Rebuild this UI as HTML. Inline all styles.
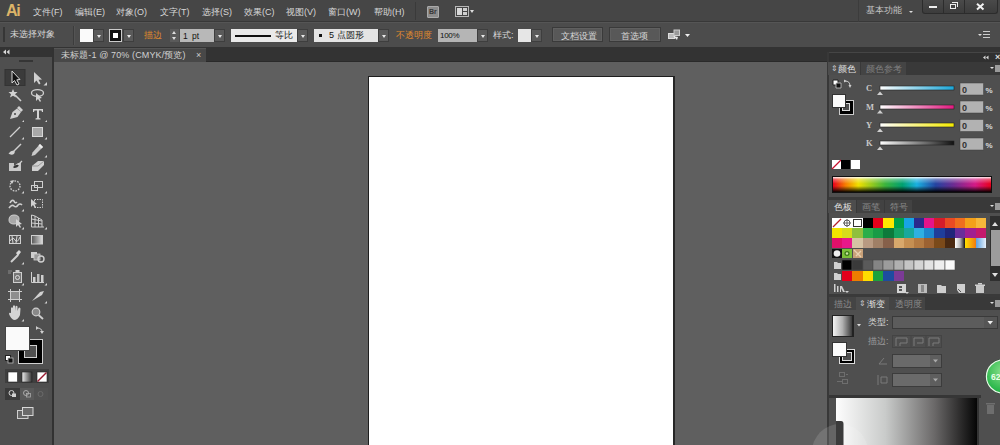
<!DOCTYPE html>
<html><head><meta charset="utf-8">
<style>
*{margin:0;padding:0;box-sizing:border-box}
html,body{width:1000px;height:445px;overflow:hidden;background:#5f5f5f;font-family:"Liberation Sans",sans-serif;position:relative}
div,span{position:absolute}
.t{white-space:nowrap;line-height:1;color:#d6d6d6;font-size:9px}
.dd{background:#5a5a5a;border:1px solid #3e3e3e;width:11px;height:13px}
.dd:after{content:"";position:absolute;left:3px;top:5px;border-left:2.5px solid transparent;border-right:2.5px solid transparent;border-top:3px solid #e8e8e8}
.tri{width:0;height:0;border-left:3px solid transparent;border-right:3px solid transparent;border-top:4px solid #ddd}
</style></head>
<body>
<!-- MENU BAR -->
<div style="left:0;top:0;width:1000px;height:22px;background:#464646;border-bottom:1px solid #383838"></div>
<div class="t" style="left:6px;top:3px;font-size:16px;font-weight:bold;color:#dcb468;letter-spacing:-1.3px">Ai</div>
<div class="t" style="left:33px;top:8px">文件(F)</div>
<div class="t" style="left:75px;top:8px">编辑(E)</div>
<div class="t" style="left:116px;top:8px">对象(O)</div>
<div class="t" style="left:160px;top:8px">文字(T)</div>
<div class="t" style="left:202px;top:8px">选择(S)</div>
<div class="t" style="left:244px;top:8px">效果(C)</div>
<div class="t" style="left:286px;top:8px">视图(V)</div>
<div class="t" style="left:328px;top:8px">窗口(W)</div>
<div class="t" style="left:374px;top:8px">帮助(H)</div>
<div style="left:415px;top:2px;width:1px;height:18px;background:#3a3a3a"></div>
<div style="left:427px;top:6px;width:12px;height:12px;background:#8c8c8c;border:1px solid #aaa;border-radius:1px"></div>
<div class="t" style="left:429px;top:8px;font-size:7px;font-weight:bold;color:#383838">Br</div>
<div style="left:455px;top:6px;width:14px;height:11px;border:1px solid #b8b8b8;background:#444"></div>
<div style="left:457px;top:8px;width:5px;height:7px;background:#d8d8d8"></div>
<div style="left:463px;top:8px;width:4px;height:3px;background:#d0d0d0"></div>
<div style="left:463px;top:12px;width:4px;height:3px;background:#d0d0d0"></div>
<div class="tri" style="left:470px;top:10px;border-width:3.5px 2.5px 0 2.5px"></div>
<div style="left:858px;top:0;width:1px;height:22px;background:#3c3c3c"></div>
<div class="t" style="left:866px;top:6px;color:#c8c8c8">基本功能</div>
<div class="tri" style="left:909px;top:11px;border-width:2px 2px 0 2px"></div>
<!-- window controls -->
<div style="left:922px;top:0;width:76px;height:14px;background:linear-gradient(#4a4a4a,#3c3c3c);border:1px solid #2c2c2c;border-top:none;border-radius:0 0 3px 3px"></div>
<div style="left:943px;top:0;width:1px;height:13px;background:#2c2c2c"></div>
<div style="left:964px;top:0;width:1px;height:13px;background:#2c2c2c"></div>
<div style="left:929px;top:6px;width:8px;height:2px;background:#eee"></div>
<div style="left:950px;top:4px;width:6px;height:5px;border:1px solid #eee"></div>
<div style="left:952px;top:2px;width:6px;height:5px;border:1px solid #eee;border-left:none;border-bottom:none"></div>
<svg style="position:absolute;left:970px;top:0" width="20" height="14" viewBox="970 0 20 14"><path d="M977,3.8 L983.5,9.5 M983.5,3.8 L977,9.5" stroke="#f2f2f2" stroke-width="2"/></svg>

<!-- CONTROL BAR -->
<div style="left:0;top:22px;width:1000px;height:25px;background:#4c4c4c;border-top:1px solid #555"></div>
<div style="left:3px;top:27px;width:2px;height:15px;background:#363636"></div>
<div style="left:73px;top:26px;width:1px;height:19px;background:#3c3c3c"></div><div style="left:74px;top:26px;width:1px;height:19px;background:#545454"></div>
<div class="t" style="left:10px;top:30px;font-size:9px">未选择对象</div>
<div style="left:80px;top:29px;width:13px;height:13px;background:#fafafa"></div>
<div class="dd" style="left:93px;top:29px"></div>
<div style="left:109px;top:29px;width:13px;height:13px;background:#111;border:1px solid #ccc"></div>
<div style="left:112px;top:32px;width:7px;height:7px;background:#fff;border:1px solid #111"></div>
<div class="dd" style="left:123px;top:29px"></div>
<div class="t" style="left:144px;top:31px;font-size:9px;color:#e08a2e">描边</div>
<div style="left:170px;top:29px;width:9px;height:13px;background:#5a5a5a"></div>
<div class="tri" style="left:172px;top:31px;border-width:0 2.5px 3px 2.5px;border-bottom:3px solid #ddd;border-top:none"></div>
<div class="tri" style="left:172px;top:37px;border-width:3px 2.5px 0 2.5px"></div>
<div style="left:180px;top:29px;width:34px;height:13px;background:#b8b8b8"></div>
<div class="t" style="left:183px;top:32px;font-size:8.5px;color:#111;word-spacing:2px">1 pt</div>
<div class="dd" style="left:214px;top:29px"></div>
<div style="left:231px;top:29px;width:66px;height:13px;background:#eaeaea"></div>
<div style="left:235px;top:35px;width:36px;height:2px;background:#111"></div>
<div class="t" style="left:275px;top:31px;font-size:9px;color:#111">等比</div>
<div class="dd" style="left:297px;top:29px"></div>
<div style="left:314px;top:29px;width:64px;height:13px;background:#e4e4e4"></div>
<div style="left:319px;top:34px;width:3px;height:3px;background:#111"></div>
<div class="t" style="left:329px;top:31px;font-size:9px;color:#111">5 点圆形</div>
<div class="dd" style="left:378px;top:29px"></div>
<div class="t" style="left:396px;top:31px;font-size:9px;color:#e08a2e">不透明度</div>
<div style="left:438px;top:29px;width:39px;height:13px;background:#b5b5b5"></div>
<div class="t" style="left:440px;top:32px;font-size:8px;color:#111;letter-spacing:-0.3px">100%</div>
<div class="dd" style="left:477px;top:29px"></div>
<div class="t" style="left:493px;top:31px;font-size:9px">样式:</div>
<div style="left:518px;top:29px;width:13px;height:13px;background:#e6e6e6"></div>
<div class="dd" style="left:531px;top:29px"></div>
<div style="left:552px;top:27px;width:51px;height:15px;background:#585858;border:1px solid #3a3a3a;box-shadow:inset 0 0 0 1px #606060"></div>
<div class="t" style="left:561px;top:32px;font-size:9px">文档设置</div>
<div style="left:609px;top:27px;width:52px;height:15px;background:#585858;border:1px solid #3a3a3a;box-shadow:inset 0 0 0 1px #606060"></div>
<div class="t" style="left:621px;top:32px;font-size:9px">首选项</div>
<svg style="position:absolute;left:665px;top:27px" width="30" height="16" viewBox="665 27 30 16">
<rect x="668.5" y="33.5" width="6" height="5" fill="#bbb" stroke="#ddd" stroke-width="1"/>
<rect x="674" y="30" width="5.5" height="5.5" fill="#999" stroke="#ccc" stroke-width="1"/>
<path d="M673,36 L677,40 L678,37 Z" fill="#e8e8e8"/>
<path d="M685,34 L690,34 L687.5,37 Z" fill="#eee"/>
</svg>

<div class="tri" style="left:978px;top:34px;border-width:2px 2px 0 2px"></div>
<div style="left:983px;top:31px;width:7px;height:1px;background:#ccc"></div>
<div style="left:983px;top:34px;width:7px;height:1px;background:#ccc"></div>
<div style="left:983px;top:37px;width:7px;height:1px;background:#ccc"></div>

<!-- DARK STRIP -->
<div style="left:0;top:47px;width:1000px;height:15px;background:#333;border-bottom:1px solid #2a2a2a"></div>
<div style="left:54px;top:48px;width:152px;height:14px;background:#484848;border-top:1px solid #555"></div>
<div class="t" style="left:61px;top:51px;font-size:9px;color:#d0d0d0;letter-spacing:0.12px">未标题-1 @ 70% (CMYK/预览)</div>
<div class="t" style="left:196px;top:51px;font-size:9px;color:#ccc">×</div>

<!-- LEFT TOOLBAR -->
<div style="left:0;top:47px;width:52px;height:398px;background:#4f4f4f"></div>
<div style="left:0;top:47px;width:52px;height:10px;background:#333"></div>
<svg style="position:absolute;left:0;top:47px" width="14" height="10" viewBox="0 47 14 10"><path d="M3,52 L6,49.5 L6,54.5 Z M6.5,52 L9.5,49.5 L9.5,54.5 Z" fill="#d8d8d8"/></svg>
<div style="left:52px;top:47px;width:2px;height:398px;background:#323232"></div>
<div style="left:19px;top:60px;width:14px;height:2px;background:#353535"></div>


<svg style="position:absolute;left:0;top:0" width="60" height="445" viewBox="0 0 60 445">
<g fill="#d2d2d2" stroke="none">
<!-- active selection box -->
<rect x="5" y="69.5" width="20" height="16" fill="#3b3b3b" stroke="#333" stroke-width="1"/>
<!-- selection arrow -->
<path d="M12,71 L12,83 L14.5,80.5 L17,85 L19,84 L16.8,79.8 L20,79.5 Z" fill="#111" stroke="#d8d8d8" stroke-width="1"/>
<!-- direct selection -->
<path d="M34,72 L34,83 L36.5,80.5 L39,84.5 L40.5,83.5 L38.5,79.8 L42,79.5 Z" fill="#cfcfcf"/>
<path d="M47,82 L47,85.5 L43.5,85.5 Z"/>
<!-- magic wand -->
<path d="M13,89 L14.3,92 L17.5,92 L15,94.2 L16,97.5 L13,95.7 L10,97.5 L11,94.2 L8.5,92 L11.7,92 Z"/>
<path d="M15,95 L21,101" stroke="#cfcfcf" stroke-width="1.6"/>
<!-- lasso -->
<ellipse cx="37.5" cy="93" rx="6" ry="3.4" fill="none" stroke="#cfcfcf" stroke-width="1.3"/>
<path d="M36,93 L36,101 L38,99 L40,102 L41,101 L39.5,98.5 L42,98 Z"/>
<!-- pen -->
<path d="M10,119 L12.5,112 L17,108.5 L21,112 L17.5,117 Z" fill="#d0d0d0"/>
<path d="M17,108 L19,106 L23,110 L21,112 Z" fill="#d0d0d0"/>
<circle cx="15" cy="114" r="1" fill="#444"/>
<path d="M24,120 L24,122 L22,122 Z"/>
<!-- Type T -->
<path d="M33,109 L43,109 L43,112 L42,112 L41.5,110.5 L39,110.5 L39,118 L40.5,118.5 L40.5,119.5 L35.5,119.5 L35.5,118.5 L37,118 L37,110.5 L34.5,110.5 L34,112 L33,112 Z" fill="#d4d4d4"/>
<path d="M47,120 L47,122 L45,122 Z"/>
<!-- line -->
<path d="M10,137 L20,127" stroke="#d0d0d0" stroke-width="1.3"/>
<path d="M24,137 L24,139.5 L21.5,139.5 Z"/>
<!-- rectangle -->
<rect x="32.5" y="127.5" width="10" height="9" fill="#a8a8a8" stroke="#d8d8d8" stroke-width="1"/>
<path d="M47,137 L47,139.5 L44.5,139.5 Z"/>
<!-- paintbrush -->
<path d="M21,144 L14,151" stroke="#d0d0d0" stroke-width="1.5"/>
<path d="M8.5,153.5 Q11,150 14.5,150.5 Q15.5,153 13,154.5 Q10,155 8.5,153.5 Z"/>
<!-- pencil -->
<path d="M40,144 L43,147 L35,155 L31.5,156 L32.5,152.5 Z" fill="#cacaca"/>
<path d="M40,144 L43,147 L41.5,148.5 L38.5,145.5 Z" fill="#eee"/>
<path d="M47,155 L47,157.5 L44.5,157.5 Z"/>
<!-- blob brush -->
<path d="M9,163 L14,163 L14,166 L18,163 L21,163 L21,171 L9,171 Z" fill="#c8c8c8"/>
<path d="M13,167 Q16,164 19,165 Q18,168 14,168 Z" fill="#333"/>
<path d="M18,165 L22,161" stroke="#d0d0d0" stroke-width="1.3"/>
<!-- eraser -->
<path d="M32,166 L38,161 L44,161 L44,165 L38,171 L32,171 Z" fill="#d0d0d0"/>
<path d="M32,166 L38,166 L44,161" stroke="#8a8a8a" stroke-width="0.8" fill="none"/>
<path d="M47,172 L47,174.5 L44.5,174.5 Z"/>
<!-- rotate -->
<circle cx="15" cy="186" r="5" fill="none" stroke="#c8c8c8" stroke-width="1.4" stroke-dasharray="1.6 1.2"/>
<path d="M10,181 L14,180 L12,184 Z"/>
<path d="M24,191 L24,193.5 L21.5,193.5 Z"/>
<!-- scale -->
<rect x="34.5" y="181.5" width="8" height="6" fill="none" stroke="#cfcfcf" stroke-width="1"/>
<rect x="31.5" y="185.5" width="6" height="5" fill="none" stroke="#cfcfcf" stroke-width="1"/>
<path d="M47,191 L47,193.5 L44.5,193.5 Z"/>
<!-- warp / puppet -->
<path d="M9,208 Q12,204 14,206 Q16,208 18,205 Q20,203 22,205 M10,203 Q12,199 14,201 Q15,204 17,202" fill="none" stroke="#cfcfcf" stroke-width="1.6"/>
<path d="M24,209 L24,211.5 L21.5,211.5 Z"/>
<!-- free transform -->
<rect x="34.5" y="199.5" width="8" height="8" fill="none" stroke="#cfcfcf" stroke-width="1" stroke-dasharray="1.5 1"/>
<path d="M31,199 L31,207 L33,205 L35,208 L36,207 L34.5,204.5 L37,204 Z"/>
<!-- shape builder -->
<path d="M9,220 Q9,215 14,215 Q19,215 19,219 Q19,224 14,224 Q9,224 9,220 Z" fill="#a8a8a8" stroke="#cfcfcf" stroke-width="1"/>
<path d="M16,219 L16,227 L18,225 L20,228 L21,227 L19.5,224.5 L22,224 Z"/>
<path d="M24,227 L24,229.5 L21.5,229.5 Z"/>
<!-- perspective grid -->
<path d="M31.5,215 L31.5,227 L44,227 M31.5,215 L35,216 L35,227 M35,216 L38.5,218 L38.5,227 M38.5,218 L42,220 L42,227 M31.5,219 L42,221 M31.5,223 L42,224" fill="none" stroke="#cfcfcf" stroke-width="1"/>
<path d="M47,227 L47,229.5 L44.5,229.5 Z"/>
<!-- mesh -->
<rect x="9.5" y="235.5" width="11" height="8" fill="#555" stroke="#d0d0d0" stroke-width="1"/>
<path d="M10,241 Q13,236 15,240 Q17,244 20,237 M12,236 L13,243 M17,236 L16,243" fill="none" stroke="#d8d8d8" stroke-width="1"/>
<!-- gradient -->
<defs><linearGradient id="tg" x1="0" x2="1"><stop offset="0" stop-color="#555"/><stop offset="1" stop-color="#ddd"/></linearGradient></defs>
<rect x="31.5" y="235.5" width="11" height="8.5" fill="url(#tg)" stroke="#cfcfcf" stroke-width="1"/>
<!-- eyedropper -->
<path d="M11,262 L18,255" stroke="#cfcfcf" stroke-width="2"/>
<path d="M16,253 L19,250 L21,252 L18,256 Z" fill="#d8d8d8"/>
<path d="M24,262 L24,264.5 L21.5,264.5 Z"/>
<!-- blend -->
<rect x="31" y="252" width="6" height="6" fill="#cfcfcf"/>
<rect x="34" y="254" width="6" height="6" fill="#9a9a9a" stroke="#cfcfcf" stroke-width="0.8"/>
<circle cx="41" cy="259" r="3" fill="none" stroke="#cfcfcf" stroke-width="1.4"/>
<!-- symbol sprayer -->
<rect x="13.5" y="272.5" width="8" height="10" fill="#777" stroke="#cfcfcf" stroke-width="1"/>
<circle cx="17.5" cy="277.5" r="2" fill="none" stroke="#ddd" stroke-width="1"/>
<rect x="15.5" y="270" width="4" height="2" fill="#cfcfcf"/>
<path d="M8,271 L12,271 M8,273 L11,273" stroke="#999" stroke-width="0.8"/>
<path d="M24,283 L24,285.5 L21.5,285.5 Z"/>
<!-- graph -->
<path d="M31.5,272 L31.5,282.5 L44,282.5" fill="none" stroke="#cfcfcf" stroke-width="1"/>
<rect x="33" y="277" width="2.5" height="5" fill="#cfcfcf"/>
<rect x="37" y="274" width="2.5" height="8" fill="#bbb"/>
<rect x="41" y="275" width="2.5" height="7" fill="#cfcfcf"/>
<path d="M47,283 L47,285.5 L44.5,285.5 Z"/>
<!-- artboard -->
<rect x="10.5" y="291.5" width="9" height="8" fill="#8e8e8e"/>
<path d="M8,291.5 L22,291.5 M8,299.5 L22,299.5 M10.5,289 L10.5,302 M19.5,289 L19.5,302" stroke="#cfcfcf" stroke-width="1"/>
<!-- slice -->
<path d="M32,301 L40,292 L44,291 L42,295 Z" fill="#d0d0d0"/>
<path d="M47,301 L47,303.5 L44.5,303.5 Z"/>
<!-- hand -->
<path d="M11,313 L11,308 Q12,306.5 13,308 L13,311 L13,306 Q14,304.5 15,306 L15,311 L15.5,306.5 Q16.5,305 17.5,306.5 L17.5,311 L18.5,308 Q19.5,307 20.5,308.5 L20,315 Q18,320 14,320 Q11,319 9,314 Q9,312 11,313 Z" fill="#d4d4d4"/>
<path d="M24,319 L24,321.5 L21.5,321.5 Z"/>
<!-- zoom -->
<circle cx="36" cy="312" r="3.8" fill="#8a8a8a" stroke="#cfcfcf" stroke-width="1.2"/>
<path d="M38.5,315 L43,319" stroke="#cfcfcf" stroke-width="1.8"/>
</g>
</svg>
<!-- fill/stroke -->
<div style="left:18px;top:339px;width:25px;height:25px;border:1px solid #cfcfcf;background:#000"></div>
<div style="left:24px;top:345px;width:13px;height:13px;border:1px solid #cfcfcf;background:#4f4f4f"></div>
<div style="left:5px;top:326px;width:25px;height:25px;background:#fafafa;border:1px solid #444"></div>
<svg style="position:absolute;left:0;top:320px" width="60" height="125" viewBox="0 320 60 125">
<path d="M37,328 Q42,328 42,332" fill="none" stroke="#cfcfcf" stroke-width="1"/>
<path d="M36,326 L38.5,328 L36,330 Z M40,331 L42,334 L44,331 Z" fill="#cfcfcf"/>
<rect x="5.5" y="355.5" width="5" height="5" fill="#fff" stroke="#222" stroke-width="1"/>
<rect x="8" y="358" width="5" height="5" fill="#111" stroke="#bbb" stroke-width="0.8"/>
<!-- color mode buttons -->
<rect x="5" y="369" width="44" height="14" fill="#3f3f3f"/>
<rect x="8" y="372" width="9.5" height="10" fill="#fff" stroke="#222" stroke-width="0.6"/>
<defs><linearGradient id="tg2" x1="0" x2="1"><stop offset="0" stop-color="#eee"/><stop offset="1" stop-color="#333"/></linearGradient></defs>
<rect x="22" y="372" width="10" height="10" fill="url(#tg2)" stroke="#222" stroke-width="0.6"/>
<rect x="37" y="372" width="10" height="10" fill="#fff" stroke="#222" stroke-width="0.6"/>
<path d="M37.5,381.5 L46.5,372.5" stroke="#9a1b30" stroke-width="1.4"/>
<!-- draw mode buttons -->
<rect x="5" y="388" width="15" height="12" fill="#3a3a3a"/>
<rect x="20" y="388" width="14" height="12" fill="#5a5a5a"/>
<rect x="34" y="388" width="14" height="12" fill="#525252"/>
<circle cx="11.5" cy="393" r="2.5" fill="none" stroke="#cfcfcf" stroke-width="1"/>
<rect x="12" y="393.5" width="4" height="3.5" fill="#cfcfcf"/>
<circle cx="26" cy="393" r="2.5" fill="none" stroke="#aaa" stroke-width="1"/>
<rect x="26.5" y="393.5" width="4" height="3.5" fill="none" stroke="#aaa" stroke-width="0.8"/>
<circle cx="40.5" cy="394" r="2.5" fill="none" stroke="#6a6a6a" stroke-width="1"/>
<!-- screen mode -->
<rect x="17.5" y="410.5" width="10.5" height="8" fill="#666" stroke="#cfcfcf" stroke-width="1"/>
<rect x="22.5" y="407.5" width="10.5" height="8" fill="#6a6a6a" stroke="#d8d8d8" stroke-width="1"/>
</svg>

<!-- ARTBOARD -->
<div style="left:368px;top:76px;width:307px;height:369px;background:#fff;border-top:1px solid #1e1e1e;border-left:1px solid #1e1e1e;border-right:2px solid #262626"></div>

<!-- RIGHT DOCK -->
<div style="left:827px;top:52px;width:173px;height:393px;background:#4f4f4f"></div>
<div style="left:827px;top:52px;width:173px;height:10px;background:#303030;border-top:1px solid #454545;border-radius:3px 0 0 0"></div>
<div style="left:827px;top:52px;width:2px;height:393px;background:#383838"></div>
<svg style="position:absolute;left:980px;top:53px" width="20" height="9" viewBox="980 53 20 9"><path d="M983,57.5 L985.5,55.5 L985.5,59.5 Z M986,57.5 L988.5,55.5 L988.5,59.5 Z" fill="#d8d8d8"/></svg>
<div class="t" style="left:995px;top:53px;font-size:9px;color:#ddd;font-weight:bold">×</div>
<!-- color panel tabs -->
<div style="left:829px;top:62px;width:171px;height:13px;background:#393939"></div>
<div style="left:828px;top:62px;width:32px;height:13px;background:#4d4d4d"></div>
<div style="left:861px;top:62px;width:45px;height:13px;background:#444"></div>
<div class="t" style="left:831px;top:65px;font-size:8px;color:#ccc">⇕</div>
<div class="t" style="left:838px;top:65px;font-size:9px;color:#e0e0e0">颜色</div>
<div class="t" style="left:866px;top:65px;font-size:9px;color:#808080">颜色参考</div>
<div class="tri" style="left:990px;top:67px;border-width:2px 2px 0 2px"></div>
<div style="left:995px;top:65px;width:5px;height:7px;background:#9a9a9a"></div>
<!-- color panel body -->
<div style="left:832px;top:94px;width:14px;height:14px;background:#fbfbfb;border:1px solid #333;z-index:2"></div>
<div style="left:839px;top:100px;width:15px;height:15px;background:#000;border:1px solid #ccc"></div>
<div style="left:842px;top:103px;width:8px;height:8px;background:#4f4f4f;border:1px solid #ddd"></div>
<svg style="position:absolute;left:827px;top:75px" width="173" height="125" viewBox="827 75 173 125">
<defs>
<linearGradient id="gc" x1="0" x2="1"><stop offset="0" stop-color="#fff"/><stop offset="1" stop-color="#1aa6d8"/></linearGradient>
<linearGradient id="gm" x1="0" x2="1"><stop offset="0" stop-color="#fff"/><stop offset="1" stop-color="#e2197f"/></linearGradient>
<linearGradient id="gy" x1="0" x2="1"><stop offset="0" stop-color="#fff"/><stop offset="1" stop-color="#f4ea00"/></linearGradient>
<linearGradient id="gk" x1="0" x2="1"><stop offset="0" stop-color="#fff"/><stop offset="1" stop-color="#111"/></linearGradient>
<linearGradient id="spec" x1="0" x2="1">
<stop offset="0" stop-color="#e8001c"/><stop offset="0.08" stop-color="#f57e00"/><stop offset="0.16" stop-color="#f0e000"/><stop offset="0.33" stop-color="#3cb43c"/><stop offset="0.44" stop-color="#00a070"/><stop offset="0.53" stop-color="#19b0e0"/><stop offset="0.65" stop-color="#2443a0"/><stop offset="0.76" stop-color="#6a2c92"/><stop offset="0.9" stop-color="#d41a86"/><stop offset="1" stop-color="#e8001c"/>
</linearGradient>
<linearGradient id="specv" x1="0" x2="0" y1="0" y2="1"><stop offset="0" stop-color="#fff" stop-opacity="0.95"/><stop offset="0.15" stop-color="#fff" stop-opacity="0.35"/><stop offset="0.45" stop-color="#fff" stop-opacity="0"/><stop offset="0.6" stop-color="#000" stop-opacity="0"/><stop offset="1" stop-color="#000" stop-opacity="0.95"/></linearGradient>
</defs>
<path d="M833,80 L838,80 L838,85 L833,85 Z" fill="#fff" stroke="#222" stroke-width="1"/>
<path d="M836,83 L841,83 L841,88 L836,88 Z" fill="#111" stroke="#ccc" stroke-width="0.8"/>
<path d="M845,81 Q850,81 850,86" fill="none" stroke="#cfcfcf" stroke-width="1"/>
<path d="M844,79.5 L846.5,81 L844,82.5 Z M848.5,85 L850,88 L851.5,85 Z" fill="#cfcfcf"/>
<g font-family="Liberation Serif" font-size="8.5" font-weight="bold" fill="#c8c8c8">
<text x="866" y="91">C</text><text x="866" y="110">M</text><text x="866" y="128">Y</text><text x="866" y="146">K</text>
</g>
<rect x="880" y="86" width="74" height="4" fill="url(#gc)" stroke="#222" stroke-width="0.6"/>
<rect x="880" y="105" width="74" height="4" fill="url(#gm)" stroke="#222" stroke-width="0.6"/>
<rect x="880" y="123" width="74" height="4" fill="url(#gy)" stroke="#222" stroke-width="0.6"/>
<rect x="880" y="141" width="74" height="4" fill="url(#gk)" stroke="#222" stroke-width="0.6"/>
<g fill="#cfcfcf">
<path d="M877,95 L880,91.5 L883,95 Z"/><path d="M877,113.5 L880,110 L883,113.5 Z"/><path d="M877,132 L880,128.5 L883,132 Z"/><path d="M877,150 L880,146.5 L883,150 Z"/>
</g>
<g fill="#b2b2b2" stroke="#3e3e3e" stroke-width="0.5">
<rect x="960" y="83" width="23.5" height="12"/><rect x="960" y="101" width="23.5" height="12"/><rect x="960" y="119.5" width="23.5" height="12"/><rect x="960" y="138" width="23.5" height="12"/>
</g>
<g font-family="Liberation Sans" font-size="9" font-weight="bold" fill="#333"><text x="962" y="92.5">0</text><text x="962" y="110.5">0</text><text x="962" y="129">0</text><text x="962" y="147.5">0</text></g>
<g font-family="Liberation Sans" font-size="8" font-weight="bold" fill="#dcdcdc"><text x="985.5" y="92.5">%</text><text x="985.5" y="110.5">%</text><text x="985.5" y="129">%</text><text x="985.5" y="147.5">%</text></g>
<!-- none/black/white -->
<rect x="832" y="160" width="9" height="9" fill="#fff"/>
<path d="M832,169 L841,160" stroke="#c8102e" stroke-width="1.2"/>
<rect x="841" y="160" width="9" height="9" fill="#000"/>
<rect x="851" y="160" width="9" height="9" fill="#fff"/>
<!-- spectrum -->
<rect x="832" y="176" width="160" height="17" fill="#111"/>
<rect x="833" y="177" width="158" height="15" fill="url(#spec)"/>
<rect x="833" y="177" width="158" height="15" fill="url(#specv)"/>
</svg>
<div style="left:829px;top:197px;width:171px;height:3px;background:#3a3a3a"></div>
<!-- SWATCHES PANEL -->
<div style="left:829px;top:200px;width:171px;height:13px;background:#393939"></div>
<div style="left:828px;top:200px;width:28px;height:13px;background:#4d4d4d"></div>
<div style="left:857px;top:200px;width:27px;height:13px;background:#424242"></div>
<div style="left:885px;top:200px;width:27px;height:13px;background:#424242"></div>
<div class="t" style="left:834px;top:203px;font-size:9px;color:#e0e0e0">色板</div>
<div class="t" style="left:862px;top:203px;font-size:9px;color:#8a8a8a">画笔</div>
<div class="t" style="left:890px;top:203px;font-size:9px;color:#8a8a8a">符号</div>
<div class="tri" style="left:990px;top:205px;border-width:2px 2px 0 2px"></div>
<div style="left:995px;top:203px;width:5px;height:7px;background:#9a9a9a"></div>
<svg style="position:absolute;left:827px;top:213px" width="173" height="232" viewBox="827 213 173 232">
<defs>
<linearGradient id="sg1" x1="0" x2="1"><stop offset="0" stop-color="#fff"/><stop offset="0.5" stop-color="#bbb"/><stop offset="1" stop-color="#111"/></linearGradient>
<linearGradient id="sg2" x1="0" x2="1"><stop offset="0" stop-color="#ffe000"/><stop offset="1" stop-color="#f07a10"/></linearGradient>
<linearGradient id="sg3" x1="0" x2="1"><stop offset="0" stop-color="#5aa0e0"/><stop offset="1" stop-color="#e8f2fc"/></linearGradient>
<linearGradient id="gpv" x1="0" x2="1"><stop offset="0" stop-color="#fdfdfd"/><stop offset="0.35" stop-color="#c9cbca"/><stop offset="0.7" stop-color="#6a6868"/><stop offset="1" stop-color="#050505"/></linearGradient>
<linearGradient id="gsw" x1="0" x2="1"><stop offset="0" stop-color="#f4f4f4"/><stop offset="0.5" stop-color="#b0b0b0"/><stop offset="1" stop-color="#3a3a3a"/></linearGradient>
<radialGradient id="green" cx="0.5" cy="0.35" r="0.6"><stop offset="0" stop-color="#8be08c"/><stop offset="1" stop-color="#26b548"/></radialGradient>
</defs>
<rect x="832" y="218" width="10" height="10" fill="#fff"/><path d="M833,227 L841,219" stroke="#b5202a" stroke-width="1.2"/>
<rect x="842" y="218" width="10" height="10" fill="#fff"/><circle cx="847" cy="223" r="3" fill="none" stroke="#333" stroke-width="0.8"/><path d="M843,223 L851,223 M847,219 L847,227" stroke="#333" stroke-width="0.7"/>
<rect x="852" y="218" width="11" height="10" fill="#fff"/><rect x="853.5" y="219.5" width="8" height="7" fill="#fff" stroke="#333" stroke-width="1"/>
<rect x="863" y="218" width="10" height="10" fill="#000000"/>
<rect x="873" y="218" width="10" height="10" fill="#e3001b"/>
<rect x="883" y="218" width="11" height="10" fill="#ffe800"/>
<rect x="894" y="218" width="10" height="10" fill="#00a04a"/>
<rect x="904" y="218" width="10" height="10" fill="#18a4e4"/>
<rect x="914" y="218" width="10" height="10" fill="#2a2a8c"/>
<rect x="924" y="218" width="10" height="10" fill="#e5148a"/>
<rect x="934" y="218" width="11" height="10" fill="#d51c2b"/>
<rect x="945" y="218" width="10" height="10" fill="#e94a24"/>
<rect x="955" y="218" width="10" height="10" fill="#ef6e1e"/>
<rect x="965" y="218" width="11" height="10" fill="#f4a01a"/>
<rect x="976" y="218" width="10" height="10" fill="#f6b73a"/>
<rect x="832" y="228" width="10" height="10" fill="#f2e500"/>
<rect x="842" y="228" width="10" height="10" fill="#d7dc1c"/>
<rect x="852" y="228" width="11" height="10" fill="#8fc03d"/>
<rect x="863" y="228" width="10" height="10" fill="#2aae4a"/>
<rect x="873" y="228" width="10" height="10" fill="#189b46"/>
<rect x="883" y="228" width="11" height="10" fill="#0c7a3b"/>
<rect x="894" y="228" width="10" height="10" fill="#16a161"/>
<rect x="904" y="228" width="10" height="10" fill="#17a89c"/>
<rect x="914" y="228" width="10" height="10" fill="#2eb0e2"/>
<rect x="924" y="228" width="10" height="10" fill="#1e86cc"/>
<rect x="934" y="228" width="11" height="10" fill="#1f3e9a"/>
<rect x="945" y="228" width="10" height="10" fill="#20267a"/>
<rect x="955" y="228" width="10" height="10" fill="#6a2d9a"/>
<rect x="965" y="228" width="11" height="10" fill="#a01f90"/>
<rect x="976" y="228" width="10" height="10" fill="#c3196c"/>
<rect x="832" y="238" width="10" height="10" fill="#e0106a"/>
<rect x="842" y="238" width="10" height="10" fill="#e8178a"/>
<rect x="852" y="238" width="11" height="10" fill="#d5c2a4"/>
<rect x="863" y="238" width="10" height="10" fill="#b89a82"/>
<rect x="873" y="238" width="10" height="10" fill="#9f7f66"/>
<rect x="883" y="238" width="11" height="10" fill="#86604a"/>
<rect x="894" y="238" width="10" height="10" fill="#d8a86c"/>
<rect x="904" y="238" width="10" height="10" fill="#c58f52"/>
<rect x="914" y="238" width="10" height="10" fill="#b37a42"/>
<rect x="924" y="238" width="10" height="10" fill="#9c6232"/>
<rect x="934" y="238" width="11" height="10" fill="#7b4a1a"/>
<rect x="945" y="238" width="10" height="10" fill="#4a2a12"/>
<rect x="955" y="238" width="10" height="10" fill="url(#sg1)"/>
<rect x="965" y="238" width="11" height="10" fill="url(#sg2)"/>
<rect x="976" y="238" width="10" height="10" fill="url(#sg3)"/>
<rect x="832" y="249" width="10" height="9" fill="#111"/><circle cx="837" cy="253.5" r="3.3" fill="#eee"/>
<rect x="842" y="249" width="10" height="9" fill="#7cc03a"/><circle cx="847" cy="253.5" r="2.6" fill="#3d7a1a"/><circle cx="847" cy="253.5" r="1.2" fill="#cde8a0"/>
<rect x="853" y="249" width="10" height="9" fill="#c8a078"/><path d="M854,250 L861,257 M856,256 L861,251" stroke="#e8d0b0" stroke-width="1.4"/>
<rect x="842" y="260" width="10" height="10" fill="#000" stroke="#4a4a4a" stroke-width="0.6"/>
<rect x="852" y="260" width="11" height="10" fill="#3a3a3a" stroke="#4a4a4a" stroke-width="0.6"/>
<rect x="863" y="260" width="10" height="10" fill="#5a5a5a" stroke="#4a4a4a" stroke-width="0.6"/>
<rect x="873" y="260" width="10" height="10" fill="#858585" stroke="#4a4a4a" stroke-width="0.6"/>
<rect x="883" y="260" width="11" height="10" fill="#9c9c9c" stroke="#4a4a4a" stroke-width="0.6"/>
<rect x="894" y="260" width="10" height="10" fill="#b0b0b0" stroke="#4a4a4a" stroke-width="0.6"/>
<rect x="904" y="260" width="10" height="10" fill="#c4c4c4" stroke="#4a4a4a" stroke-width="0.6"/>
<rect x="914" y="260" width="10" height="10" fill="#d4d4d4" stroke="#4a4a4a" stroke-width="0.6"/>
<rect x="924" y="260" width="10" height="10" fill="#e2e2e2" stroke="#4a4a4a" stroke-width="0.6"/>
<rect x="934" y="260" width="11" height="10" fill="#eeeeee" stroke="#4a4a4a" stroke-width="0.6"/>
<rect x="945" y="260" width="10" height="10" fill="#fafafa" stroke="#4a4a4a" stroke-width="0.6"/>
<rect x="842" y="271" width="10" height="10" fill="#e3001b"/>
<rect x="852" y="271" width="11" height="10" fill="#ee7d00"/>
<rect x="863" y="271" width="10" height="10" fill="#ffdd00"/>
<rect x="873" y="271" width="10" height="10" fill="#1da23d"/>
<rect x="883" y="271" width="11" height="10" fill="#1d4ca0"/>
<rect x="894" y="271" width="10" height="10" fill="#7b3a96"/>
<path d="M834,262 L837,262 L838,263 L841,263 L841,269 L834,269 Z" fill="#cfcfcf"/>
<path d="M834,273 L837,273 L838,274 L841,274 L841,280 L834,280 Z" fill="#cfcfcf"/>
<!-- scrollbar -->
<rect x="990" y="216" width="10" height="65" fill="#2f2f2f"/>
<path d="M992,226 L995,222 L998,226 Z" fill="#e0e0e0"/>
<rect x="991" y="230" width="9" height="36" fill="#9c9c9c"/>
<path d="M992,273 L995,277 L998,273 Z" fill="#e0e0e0"/>
<!-- bottom icons -->
<g fill="#cfcfcf">
<path d="M834,284 L835.5,284 L835.5,292 L834,292 Z M837,286 L838.5,286 L838.5,292 L837,292 Z M840,286 L842,286 L845,292 L843,292 L841,288 L841,292 L840,292 Z"/>
<path d="M845,291 L849,291 L847,293 Z"/>
<rect x="897" y="284" width="9" height="9" fill="#d5d5d5"/><rect x="899" y="286" width="3" height="2" fill="#555"/><rect x="899" y="289" width="3" height="2" fill="#555"/>
<path d="M905,292 L909,292 L907,294 Z"/>
<rect x="918" y="284" width="9" height="9" fill="#bcbcbc"/><rect x="921" y="285" width="3" height="7" fill="#888"/>
<path d="M937,285 L941,285 L942,286 L946,286 L946,293 L937,293 Z"/>
<path d="M957,284 L965,284 L965,293 L959,293 L957,290 Z" fill="#d0d0d0"/><path d="M958,289 L961,292" stroke="#555" stroke-width="1"/>
<rect x="976" y="286" width="8" height="7" fill="#c8c8c8"/><rect x="975" y="284.5" width="10" height="1.5"/><rect x="978" y="283" width="4" height="1.5"/>
</g>
<rect x="829" y="294" width="171" height="3" fill="#3a3a3a"/>
<!-- GRADIENT PANEL -->
<rect x="829" y="297" width="171" height="13" fill="#393939"/>
<rect x="829" y="297" width="27" height="13" fill="#444"/>
<rect x="856" y="297" width="33" height="13" fill="#4d4d4d"/>
<rect x="889" y="297" width="36" height="13" fill="#444"/>
<path d="M990,302 L994,302 L992,304 Z" fill="#ddd"/><rect x="995" y="300" width="5" height="7" fill="#9a9a9a"/>
<!-- gradient swatch -->
<rect x="832" y="315" width="22" height="22" fill="#222"/>
<rect x="833" y="316" width="19" height="20" fill="url(#gsw)"/>
<path d="M857,324 L861,324 L859,326.5 Z" fill="#ddd"/>
<!-- type dropdown -->
<rect x="892.5" y="316.5" width="105" height="12" fill="#5c5c5c" stroke="#3a3a3a" stroke-width="1"/>
<rect x="984" y="317" width="13" height="11" fill="#555"/>
<path d="M987.5,321 L993,321 L990.2,324.5 Z" fill="#eee"/>
<!-- stroke buttons -->
<rect x="892.5" y="335.5" width="49" height="12" fill="#4e4e4e" stroke="#444" stroke-width="1"/>
<path d="M911,336 L911,347 M926,336 L926,347" stroke="#444" stroke-width="1"/>
<g fill="none" stroke="#7a7a7a" stroke-width="1">
<path d="M896,346 L896,338 L907,338 L907,343 L900,343 L900,346"/>
<path d="M914,346 L914,338 L923,338 L923,343 L917,343"/>
<path d="M929,346 L929,338 L939,338 L939,343 L933,343 L933,346"/>
</g>
<!-- angle input -->
<rect x="892.5" y="354.5" width="49" height="13" fill="#6a6a6a" stroke="#3c3c3c" stroke-width="1"/>
<rect x="930" y="355" width="11" height="12" fill="#5e5e5e"/>
<path d="M933,359.5 L938,359.5 L935.5,362.5 Z" fill="#aaa"/>
<path d="M879,364 L887,364 M879,364 L884,358" fill="none" stroke="#7a7a7a" stroke-width="1"/>
<!-- aspect input -->
<rect x="892.5" y="373.5" width="49" height="13" fill="#6a6a6a" stroke="#3c3c3c" stroke-width="1"/>
<rect x="930" y="374" width="11" height="12" fill="#5e5e5e"/>
<path d="M933,378.5 L938,378.5 L935.5,381.5 Z" fill="#aaa"/>
<path d="M878,375 L878,385 M881,377 L887,377 L887,383 L881,383 Z" fill="none" stroke="#7a7a7a" stroke-width="1"/>
<!-- reverse icon -->
<g fill="none" stroke="#6e6e6e" stroke-width="1">
<rect x="839.5" y="372.5" width="5" height="4"/><rect x="842.5" y="379.5" width="5" height="4"/>
<path d="M846,374.5 L848,374.5 M837,381.5 L842,381.5"/>
</g>
<!-- preview -->
<rect x="829" y="395" width="152" height="3" fill="#363636"/>

<rect x="836" y="398" width="141" height="47" fill="url(#gpv)"/>
<rect x="977" y="398" width="2" height="47" fill="#333"/>

<path d="M844,445 L844,424 Q844,421 847,421 L836,421 L836,418 L852,418" fill="none" stroke="none"/>
<!-- trash -->
<g fill="#6e6e6e"><rect x="987" y="405" width="7" height="9"/><rect x="986" y="403" width="9" height="1.5"/></g>
<!-- green floating ball -->
<circle cx="1003" cy="376.5" r="17.5" fill="#2a4a30"/>
<circle cx="1003" cy="376.5" r="16.6" fill="url(#green)" stroke="#e8f5e8" stroke-width="1.2"/>
<text x="991" y="379.5" font-family="Liberation Sans" font-size="8.5" font-weight="bold" fill="#e8ffe8">62</text>
</svg>
<div class="t" style="left:834px;top:300px;font-size:9px;color:#8a8a8a">描边</div>
<div class="t" style="left:859px;top:300px;font-size:8px;color:#ccc">⇕</div>
<div class="t" style="left:867px;top:300px;font-size:9px;color:#e0e0e0">渐变</div>
<div class="t" style="left:895px;top:300px;font-size:9px;color:#8a8a8a">透明度</div>
<div class="t" style="left:868px;top:318px;font-size:9px;color:#d8d8d8">类型:</div>
<div class="t" style="left:868px;top:337px;font-size:9px;color:#9a9a9a">描边:</div>
<div style="left:832px;top:342px;width:15px;height:15px;background:#fbfbfb;border:1px solid #333;z-index:2"></div>
<div style="left:839px;top:349px;width:16px;height:15px;background:#000;border:1px solid #ddd"></div>
<div style="left:842px;top:352px;width:10px;height:9px;background:#4f4f4f;border:1px solid #ddd"></div>
<svg style="position:absolute;left:800px;top:400px" width="100" height="45" viewBox="800 400 100 45">
<circle cx="840" cy="452" r="28" fill="#fff" fill-opacity="0.13"/>
<path d="M836,421 L841,421 Q843.5,421 843.5,424 L843.5,445 L836,445 Z" fill="#3b3b3b"/>
</svg>
</body></html>
